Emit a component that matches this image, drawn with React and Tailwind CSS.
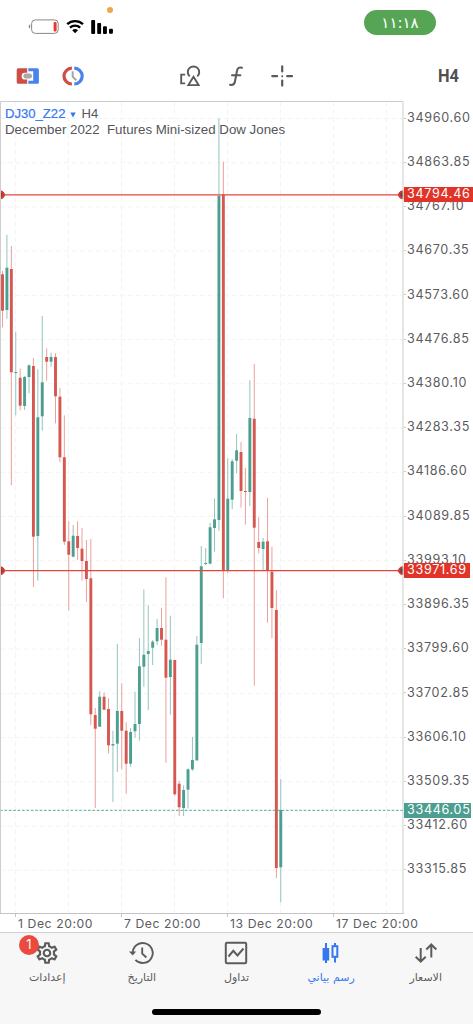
import React from "react";
import { MdOutlineSettings } from "react-icons/md";

// Plot area size in px, the svg uses the same units
const PLOT_W = 404;
const PLOT_H = 813;
const FIRST_X = 2.5;
const STEP = 4.417;

// [direction, high, body top, body bottom, low]
const CANDLES = [
  ["d", 169.7, 173.3, 209.7, 226.3],
  ["u", 133.7, 166.7, 209, 217.7],
  ["d", 145, 168, 271.3, 384.3],
  ["u", 230.7, 271, 272, 314.3],
  ["d", 267.7, 276.7, 304.7, 309.3],
  ["u", 275, 276, 305, 309],
  ["u", 263.7, 264.3, 276, 292.3],
  ["d", 257, 265, 435.7, 486],
  ["u", 268.3, 316.3, 435, 479.7],
  ["u", 215, 281.3, 315.3, 329.7],
  ["d", 247.3, 256, 260.7, 279.7],
  ["u", 251.7, 256, 260.7, 265.7],
  ["d", 252.3, 256, 295.3, 322.3],
  ["d", 287, 295.7, 356.3, 361],
  ["d", 314.3, 356.3, 440.7, 444],
  ["d", 420.3, 440.3, 453.7, 509.7],
  ["u", 424, 434.7, 455.7, 456.3],
  ["d", 420.3, 435, 447, 459],
  ["d", 427, 447.7, 460, 479.7],
  ["d", 439, 460, 478, 501],
  ["d", 438, 477.3, 613.3, 624.3],
  ["d", 607, 614, 627.7, 707],
  ["u", 590.3, 595.7, 625.7, 625.7],
  ["d", 591.3, 595.7, 608.7, 609],
  ["d", 597.3, 608, 644.3, 652.3],
  ["u", 629.7, 643, 644.5, 701],
  ["u", 543, 610, 642.7, 671],
  ["d", 582.3, 610, 629.7, 668.3],
  ["d", 621.3, 629.7, 662.7, 692.7],
  ["u", 627, 631, 662.7, 665.7],
  ["u", 590.7, 623, 630.3, 637],
  ["u", 537, 565.3, 623, 639.7],
  ["u", 488.3, 553.7, 565.7, 585.7],
  ["u", 504.3, 550, 553, 609],
  ["u", 539, 540.7, 546.7, 564],
  ["u", 518, 527, 540.3, 544],
  ["d", 506.7, 527, 538.7, 544.7],
  ["d", 476.3, 538.7, 576.7, 661.7],
  ["u", 514.7, 558.7, 576, 613.7],
  ["d", 558.7, 559, 693.3, 695],
  ["d", 679.7, 682.7, 706.3, 715],
  ["u", 684.3, 689, 707, 715],
  ["u", 667.3, 668.3, 688.7, 707.3],
  ["u", 636, 659, 668.3, 670],
  ["u", 535, 543.7, 659.3, 660],
  ["u", 445, 465.3, 542, 563],
  ["u", 447, 462, 463, 464],
  ["u", 422, 426.3, 462.7, 463],
  ["u", 397.7, 418.3, 427, 450.7],
  ["u", 17.3, 95, 419, 429.7],
  ["d", 60.7, 93.7, 469, 497.3],
  ["u", 357.3, 397.7, 469, 472.3],
  ["u", 358, 360.3, 398.7, 408.3],
  ["u", 333, 349.3, 359.7, 372.3],
  ["d", 341, 351, 390, 406.7],
  ["d", 367, 390, 391, 423.7],
  ["u", 279.3, 317, 391, 405],
  ["d", 263, 317.7, 426.7, 584.7],
  ["d", 416.3, 441, 447, 452.3],
  ["u", 437, 440.7, 448, 469],
  ["d", 397, 440.3, 469, 521.7],
  ["d", 445.7, 470.7, 507, 537.3],
  ["d", 489, 509, 767, 777.3],
  ["u", 678, 709, 766.3, 801.3],
];

const PRICES = [
  "34960.60", "34863.85", "34767.10", "34670.35", "34573.60", "34476.85",
  "34380.10", "34283.35", "34186.60", "34089.85", "33993.10", "33896.35",
  "33799.60", "33702.85", "33606.10", "33509.35", "33412.60", "33315.85",
];

const DATES = ["1 Dec 20:00", "7 Dec 20:00", "13 Dec 20:00", "17 Dec 20:00"];

const GRID_X = [15.4, 68.4, 121.5, 174.5, 227.5, 280.5, 333.5, 386.5];
const LEVELS = [93.8, 469.7];

function StatusBar() {
  return (
    <div className="relative flex h-[50px] shrink-0 justify-between pl-7 pr-[37px] pt-[10px]">
      <div className="flex pt-[9px]">
        <svg width="32" height="16" viewBox="0 0 32 16">
          <path d="M2.200 5.500v4C1 9.100.7 8.300.7 7.500S1 5.900 2.200 5.500Z" fill="#8a8a8a" />
          <rect x="3.600" y="0.900" width="26.600" height="13.500" rx="3.700" fill="none" stroke="#8f8585" strokeWidth="1" />
          <rect x="25.600" y="3" width="3" height="9.400" rx="1" fill="#e8392f" />
        </svg>
        <svg className="ml-[6px]" width="19" height="16" viewBox="0 0 19 16" fill="none" stroke="#000">
          <path d="M1.200 5.200a11.600 11.600 0 0 1 15.800 0" strokeWidth="2.400" />
          <path d="M4 8.600a7.400 7.400 0 0 1 10.200 0" strokeWidth="2.300" />
          <path d="M9.100 14.300 6.200 11.300a4.200 4.200 0 0 1 5.800 0Z" fill="#000" stroke="none" />
        </svg>
        <svg className="ml-[6px]" width="24" height="16" viewBox="0 0 24 16">
          <rect x="0.200" y="1" width="3.900" height="14" rx="1" />
          <rect x="6.200" y="4" width="3.900" height="11" rx="1" />
          <rect x="12" y="7.200" width="3.900" height="7.800" rx="1" />
          <rect x="18" y="9.800" width="3.900" height="5" rx="1" />
        </svg>
      </div>
      <div className="flex h-[25px] w-[72px] items-center justify-center rounded-full bg-[#55a555] pt-px font-['DejaVu_Sans',sans-serif] text-[15px] text-white">
        <bdo dir="ltr">١١:١٨</bdo>
      </div>
      <span className="absolute left-[107px] top-[7px] size-[6px] rounded-full bg-[#efa549]" />
    </div>
  );
}

function Toolbar() {
  return (
    <div className="flex h-[51px] shrink-0 items-center pl-4 pr-[15px] pt-px">
      <svg width="24" height="24" viewBox="0 0 24 24">
        <path d="M2.200 4.200h9v4.600H9a3.400 3.400 0 0 0 0 6.800h2.200v4.200h-9A1.500 1.500 0 0 1 .7 18.300V5.700a1.500 1.500 0 0 1 1.500-1.500Z" fill="#cc4f45" />
        <path d="M12.300 4.200h9.100a1.500 1.500 0 0 1 1.500 1.500v12.600a1.500 1.500 0 0 1-1.500 1.500h-9.100v-3h4.900V7.200h-4.900Z" fill="#4a83ea" />
        <rect x="7.400" y="9.400" width="8.600" height="5" rx="2.500" fill="#a9a9a9" />
      </svg>
      <svg className="ml-[21px]" width="24" height="24" viewBox="0 0 24 24" fill="none">
        <path d="M10.900 4.200a7.900 7.900 0 0 0 0 15.800" stroke="#cc4f45" strokeWidth="3.200" />
        <path d="M13.300 4.200a7.900 7.900 0 0 1 0 15.800" stroke="#4a83ea" strokeWidth="3.200" />
        <path d="M11.700 7.300v5.300l3.600 3.600" stroke="#a6a6a6" strokeWidth="2" />
      </svg>
      <svg className="ml-[93px]" width="24" height="24" viewBox="0 0 24 24" fill="none" stroke="#5a5a5a" strokeWidth="1.900">
        <path d="M7.200 10.600H3.200V19.400H7.200" />
        <path d="M11.700 12.400a5.700 5.700 0 1 1 7.600 0" />
        <path d="M15.500 12.800 20.600 21.100H10.400Z" />
      </svg>
      <svg className="ml-[22px]" width="24" height="24" viewBox="0 0 24 24" fill="none" stroke="#5a5a5a" strokeWidth="2" strokeLinecap="round">
        <path d="M18 3.700c-3.200-.8-4.500.6-5 3.100L10.900 17.700c-.5 2.600-1.700 3.700-4.900 3.100" />
        <path d="M8 11.200h8.400" />
      </svg>
      <svg className="ml-[22px]" width="24" height="24" viewBox="0 0 24 24" fill="none" stroke="#5a5a5a" strokeWidth="2.200" strokeLinecap="round">
        <path d="M12.200 2.400v5M12.200 16.600v5M2.300 12.200h4.800M17.200 12.200h4.800" />
        <circle cx="12.200" cy="12.200" r="1" fill="#5a5a5a" stroke="none" />
      </svg>
      <span className="ml-auto w-5 origin-left scale-x-[.86] font-[Roboto,sans-serif] text-[19px] font-bold text-[#505050]">
        H4
      </span>
    </div>
  );
}

function Plot() {
  return (
    <svg className="absolute inset-0" width={PLOT_W} height={PLOT_H} viewBox={`0 0 ${PLOT_W} ${PLOT_H}`}>
      <g stroke="#f3f4f5" strokeDasharray="5 3">
        {PRICES.map((p, i) => (
          <path key={p} d={`M0 ${17.5 + i * 44.22}H403`} />
        ))}
        {GRID_X.map((x) => (
          <path key={x} d={`M${x} 0V813`} />
        ))}
      </g>
      {CANDLES.map(([dir, high, top, bottom, low], i) => {
        const x = FIRST_X + i * STEP;
        const up = dir === "u";
        return (
          <g key={i}>
            <path d={`M${x} ${high}V${low}`} stroke={up ? "#94c4bc" : "#eaa09b"} strokeWidth="1" />
            <rect x={x - 1.45} y={top} width="2.9" height={bottom - top} fill={up ? "#4c9e90" : "#d6574f"} />
          </g>
        );
      })}
      <path d="M0 709.300H403" stroke="#5ba397" strokeDasharray="2.700 1.700" />
      {LEVELS.map((y) => (
        <g key={y}>
          <path d={`M0 ${y}H403`} stroke="#e4463a" strokeWidth="1.3" />
          <path d={`M0 ${y - 4}a4.500 4 0 0 1 0 8Z`} fill="#d5382e" stroke="#d5382e" />
          <path d={`M0 ${y - 2}a2 2 0 0 1 0 4Z`} fill="#4f4545" />
          <path d={`M403 ${y - 4}a4.500 4 0 0 0 0 8Z`} fill="#d5382e" stroke="#d5382e" />
          <path d={`M403 ${y - 2.500}a2.500 2.500 0 0 0 0 5Z`} fill="#4f4545" />
        </g>
      ))}
      <path d="M0.500 813V0.500H403V813" fill="none" stroke="#cdcdcd" />
      <path d="M0 812.500H403.500" stroke="#c4c4c4" />
    </svg>
  );
}

function Chart() {
  return (
    <div className="relative h-[813px] w-[404px] shrink-0">
      <Plot />
      <div className="relative pl-[5px] pt-[5px] font-['Liberation_Sans',Arial,sans-serif] text-[#55555a]">
        <div className="flex h-4 items-center text-[13.100px]">
          <span className="text-[#3478f0] [-webkit-text-stroke:.2px]">DJ30_Z22</span>
          <svg className="ml-[5px] mt-px" width="6" height="6" viewBox="0 0 6 6">
            <path d="M.3.500h5.400L3 5.500Z" fill="#3478f0" />
          </svg>
          <span className="ml-[5px]">H4</span>
        </div>
        <p className="h-4 whitespace-pre text-[13.300px] leading-4">December 2022  Futures Mini-sized Dow Jones</p>
      </div>
    </div>
  );
}

function PriceTag({ value, className }) {
  return (
    <span className={`absolute left-0 flex h-[15px] items-center pl-[3px] text-white ${className}`}>{value}</span>
  );
}

function PriceAxis() {
  return (
    <div className="relative h-[813px] flex-1 text-[12.600px] tracking-[.68px] text-[#5b5b60]">
      <div className="-mt-[5px] flex flex-col">
        {PRICES.map((price) => (
          <div key={price} className="flex h-[44.220px] items-center">
            <span className="h-px w-[2px] bg-[#c8c8c8]" />
            <span className="ml-px">{price}</span>
          </div>
        ))}
      </div>
      <PriceTag value="34794.46" className="top-[86px] w-[69px] bg-[#e23328]" />
      <PriceTag value="33971.69" className="top-[462px] w-[66px] bg-[#e23328]" />
      <PriceTag value="33446.05" className="top-[702px] w-[67px] bg-[#4c9e90]" />
    </div>
  );
}

function TimeAxis() {
  return (
    <div className="flex h-[18px] shrink-0 pl-[15px] text-[12.200px] tracking-[.58px] text-[#5b5b60]">
      {DATES.map((date) => (
        <div key={date} className="flex w-[106px] shrink-0 whitespace-nowrap leading-[19px]">
          <span className="h-[3px] w-px bg-[#c4c4c4]" />
          <span className="ml-[2px]">{date}</span>
        </div>
      ))}
    </div>
  );
}

function GearIcon() {
  return <MdOutlineSettings size={26} className="-m-px" />;
}

function HistoryIcon() {
  return (
    <svg className="overflow-visible" width="24" height="24" viewBox="0 0 24 24" fill="none" stroke="currentColor" strokeWidth="1.900">
      <path d="M2.700 12A10 10 0 1 1 5.400 18.800" />
      <path d="M-1 10.600h7.200L2.700 14.600Z" fill="currentColor" stroke="none" />
      <path d="M12.200 6.400v6.200l4.200 3.900" />
    </svg>
  );
}

function TradeIcon() {
  return (
    <svg width="24" height="24" viewBox="0 0 24 24" fill="none" stroke="currentColor" strokeWidth="2">
      <rect x="1.800" y="1.800" width="20.400" height="20.400" rx="1.200" />
      <path d="M4.500 15.500 9.300 9.800l4.200 4.700 6-7" />
    </svg>
  );
}

function CandlesIcon() {
  return (
    <svg width="24" height="24" viewBox="0 0 24 24" fill="none" stroke="currentColor" strokeWidth="2">
      <path d="M7 2v20M16 2v3M16 16v5.500" />
      <rect x="4.600" y="8" width="4.600" height="10.500" fill="currentColor" />
      <rect x="13.500" y="5.200" width="4.800" height="10.600" />
    </svg>
  );
}

function QuotesIcon() {
  return (
    <svg width="24" height="24" viewBox="0 0 24 24" fill="none" stroke="currentColor" strokeWidth="2">
      <path d="M6.700 7v13.500M1.700 15.700l5 5 5-5" />
      <path d="M17.300 16.500V3.500M12.300 8.500l5-5 5 5" />
    </svg>
  );
}

const TABS = [
  { label: "إعدادات", Icon: GearIcon, badge: 1 },
  { label: "التاريخ", Icon: HistoryIcon },
  { label: "تداول", Icon: TradeIcon },
  { label: "رسم بياني", Icon: CandlesIcon, active: true },
  { label: "الاسعار", Icon: QuotesIcon },
];

function TabBar() {
  return (
    <nav className="flex h-[92px] flex-col border-t border-[#d2d2d4] bg-[#f7f7f7]">
      <div className="grid grid-cols-5 pt-2">
        {TABS.map(({ label, Icon, badge, active }) => (
          <button
            key={label}
            className={`relative flex flex-col items-center ${active ? "text-[#3478f0]" : "text-[#5c5c5c]"}`}
          >
            <Icon />
            <span dir="rtl" className="mt-[5px] whitespace-nowrap font-['DejaVu_Sans',sans-serif] text-[11px] leading-4">
              {label}
            </span>
            {badge && (
              <span className="absolute -top-[6px] left-[19px] flex size-5 items-center justify-center rounded-full bg-[#ea4b3e] text-[13px] text-white">
                {badge}
              </span>
            )}
          </button>
        ))}
      </div>
      <div className="mx-auto mb-[9px] mt-auto h-[6px] w-[169px] rounded-full bg-black" />
    </nav>
  );
}

function App() {
  return (
    <main className="flex h-[1024px] w-[473px] flex-col overflow-hidden bg-white font-[Inter,sans-serif]">
      <StatusBar />
      <Toolbar />
      <div className="flex shrink-0">
        <Chart />
        <PriceAxis />
      </div>
      <TimeAxis />
      <TabBar />
    </main>
  );
}

export default App;
